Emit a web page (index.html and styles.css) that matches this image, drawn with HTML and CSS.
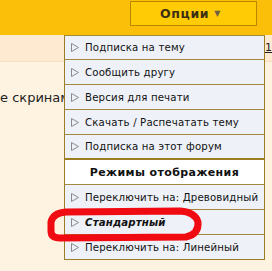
FILE: index.html
```html
<!DOCTYPE html>
<html>
<head>
<meta charset="utf-8">
<link rel="stylesheet" href="styles.css">
</head>
<body>
<div class="page">
  <div class="topbar">
    <div class="opt-btn"><span class="opt-label">Опции</span><span class="opt-arrow">▼</span></div>
  </div>
  <div class="band"><span class="pagelink">1</span></div>
  <div class="content">
    <div class="body-text">е скринами</div>
  </div>

  <div class="menu">
    <div class="item"><svg class="tri" viewBox="0 0 8 9"><polygon points="0.5,0.5 7.5,4.5 0.5,8.5" /></svg>Подписка на тему</div>
    <div class="item"><svg class="tri" viewBox="0 0 8 9"><polygon points="0.5,0.5 7.5,4.5 0.5,8.5" /></svg>Сообщить другу</div>
    <div class="item"><svg class="tri" viewBox="0 0 8 9"><polygon points="0.5,0.5 7.5,4.5 0.5,8.5" /></svg>Версия для печати</div>
    <div class="item"><svg class="tri" viewBox="0 0 8 9"><polygon points="0.5,0.5 7.5,4.5 0.5,8.5" /></svg>Скачать / Распечатать тему</div>
    <div class="item"><svg class="tri" viewBox="0 0 8 9"><polygon points="0.5,0.5 7.5,4.5 0.5,8.5" /></svg>Подписка на этот форум</div>
    <div class="item head">Режимы отображения</div>
    <div class="item"><svg class="tri" viewBox="0 0 8 9"><polygon points="0.5,0.5 7.5,4.5 0.5,8.5" /></svg>Переключить на: Древовидный</div>
    <div class="item current"><svg class="tri" viewBox="0 0 8 9"><polygon points="0.5,0.5 7.5,4.5 0.5,8.5" /></svg>Стандартный</div>
    <div class="item"><svg class="tri" viewBox="0 0 8 9"><polygon points="0.5,0.5 7.5,4.5 0.5,8.5" /></svg>Переключить на: Линейный</div>
  </div>

  <svg class="mark" viewBox="0 0 272 271" width="272" height="271">
    <path d="M66,212 L180,211 Q195,212 198,222 Q199,234 186,237 L60,238 Q51,238 51,231 L51,222 Q53,213 66,212" />
  </svg>
</div>
</body>
</html>
```
FILE: styles.css
```css
html, body {
  margin: 0;
  padding: 0;
}
body {
  width: 272px;
  height: 271px;
  overflow: hidden;
  background: #fef3e1;
  font-family: "DejaVu Sans", Verdana, sans-serif;
}
.page {
  position: relative;
  width: 272px;
  height: 271px;
  overflow: hidden;
}
.topbar {
  height: 35px;
  background: #fbbf09;
  display: flex;
  align-items: flex-start;
  padding-left: 130px;
  box-sizing: border-box;
}
.opt-btn {
  margin-top: 1px;
  width: 127px;
  height: 25px;
  box-sizing: border-box;
  border: 1px solid #b98700;
  background: #ffcb05;
  display: flex;
  align-items: center;
  justify-content: center;
  gap: 5px;
  padding-right: 6px;
  font-size: 12.5px;
  font-weight: bold;
  letter-spacing: 0.6px;
  color: #3b2e12;
}
.opt-arrow {
  font-size: 8px;
  color: #6f6040;
}
.band {
  height: 26px;
  background: #fdead1;
  border-bottom: 1px solid #f7dfc0;
  position: relative;
}
.pagelink {
  position: absolute;
  left: 265px;
  top: 6px;
  font-size: 11px;
  color: #222;
  text-decoration: underline;
}
.content {
  padding-top: 28px;
}
.body-text {
  font-size: 13px;
  color: #222;
  white-space: nowrap;
}
.menu {
  position: absolute;
  left: 64px;
  top: 35px;
  width: 201px;
  box-sizing: border-box;
  border: 1px solid #9c7d22;
  border-top: none;
  background: #eef1f7;
}
.item {
  height: 24px;
  border-bottom: 1px solid #a38a3a;
  display: flex;
  align-items: center;
  font-size: 10.2px;
  color: #111;
  white-space: nowrap;
  padding-left: 6px;
  letter-spacing: 0.15px;
}
.item:first-child {
  border-top: 1px solid #a38a3a;
  height: 23px;
}
.item:last-child {
  border-bottom: none;
}
.item:nth-child(5) {
  border-bottom: 2px solid #9c7d22;
  height: 23px;
}
.tri {
  width: 8px;
  height: 9px;
  margin-right: 6px;
  flex: none;
}
.tri polygon {
  fill: none;
  stroke: #8a8a8a;
  stroke-width: 1;
}
.head {
  background: #ffffff;
  justify-content: center;
  padding-left: 0;
  font-weight: bold;
  font-size: 11px;
  letter-spacing: 0.4px;
}
.current {
  font-weight: bold;
  font-style: italic;
}
.mark {
  position: absolute;
  left: 0;
  top: 0;
  pointer-events: none;
}
.mark path {
  fill: none;
  stroke: #f00a12;
  stroke-width: 7;
  stroke-linecap: round;
  stroke-linejoin: round;
}
```
